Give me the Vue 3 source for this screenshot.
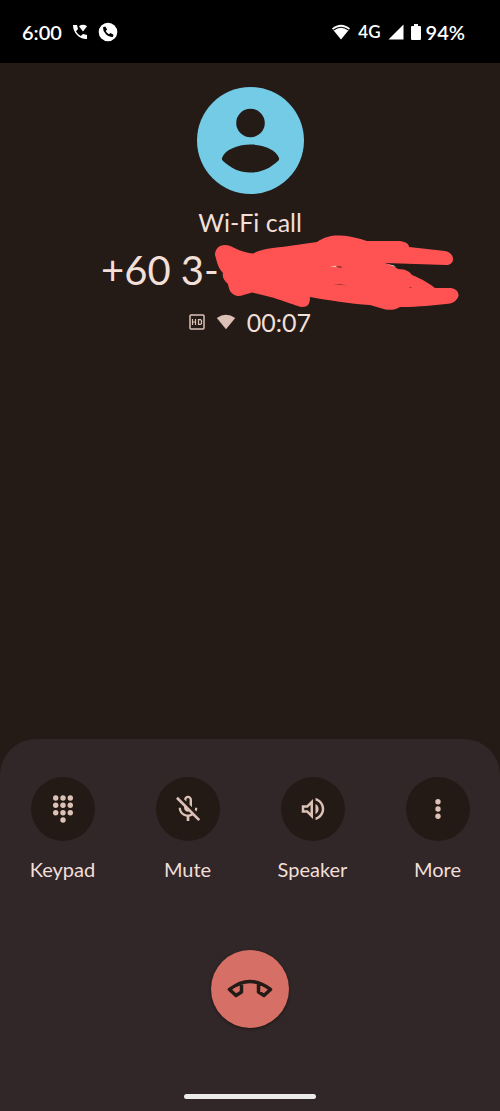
<script setup>
const keypadDots = [
  [7.7, 4], [15, 4], [22.3, 4],
  [7.7, 11.3], [15, 11.3], [22.3, 11.3],
  [7.7, 18.7], [15, 18.7], [22.3, 18.7],
  [15, 26],
]
const controls = ['Keypad', 'Mute', 'Speaker', 'More']
</script>

<template>
  <main class="screen">
    <header class="status">
      <div class="status-group left">
        <span>6:00</span>
        <svg width="16" height="16" viewBox="0 0 16 16" aria-hidden="true">
          <path d="M1 1h4l1 4-2 2.2q1.6 3.2 4.8 4.8L11 10l4 1v4q-6 .3-10-4T1 1z" />
          <path d="M7 2.2Q11 -.5 15 2.2L11 7.5z" />
        </svg>
        <svg width="20" height="20" viewBox="0 0 20 20" aria-hidden="true">
          <circle cx="10" cy="10" r="9.3" />
          <path class="ink" d="M5 5.2l2.3-.7 1.8 3-1.4 1.6q1 2.1 3.2 3.2l1.6-1.4 3 1.8-.7 2.3q-3.7.6-6.9-2.8T5 5.2z" />
        </svg>
      </div>
      <div class="status-group right">
        <svg width="20" height="16" viewBox="0 0 20 16" aria-hidden="true">
          <path d="M1 4.5Q10-3 19 4.5L10 15.5z" />
          <path class="gap-line" d="M2.5 6Q10 .5 17.5 6" />
        </svg>
        <span class="network">4G</span>
        <svg width="16" height="16" viewBox="0 0 16 16" aria-hidden="true"><path d="M15.5.5v15H.5z" /></svg>
        <div class="status-group battery">
          <svg width="10" height="16" viewBox="0 0 10 16" aria-hidden="true">
            <path d="M3 0h4v2h2q1 0 1 1v12q0 1-1 1H1q-1 0-1-1V3q0-1 1-1h2z" />
          </svg>
          <span>94%</span>
        </div>
      </div>
    </header>

    <section class="caller">
      <svg class="avatar" width="107" height="107" viewBox="0 0 107 107" role="img" aria-label="Contact">
        <circle class="avatar-bg" cx="53.5" cy="53.5" r="53.5" />
        <circle class="avatar-ink" cx="53.5" cy="36" r="14.3" />
        <path class="avatar-ink" d="M25 71C28 62 42 57.5 53.5 57.5S79 62 82 71q.5 1.500-1 3C73 81 65 85.5 53.5 85.5S34 81 26 74q-1.500-1.500-1-3z" />
      </svg>
      <p class="kind">Wi-Fi call</p>
      <h1 class="number">
        +60 3-
        <svg class="scribble" width="260" height="95" viewBox="0 0 260 95" aria-hidden="true">
          <path d="M5 31C5 25 9 21 15 21C22 21 28 28 43 29.5C52 25 62 24 72 23L107 18C115 12 124 11 130 11.5C142 12 150 15 157 17L190 17C196 18 199 20 199 23L235 27C241 28 243 32 243 35C243 39 240 41 236 41L175 39C182 41 185 43 188 45C196 45 200 48 202 51C212 55 220 60 225 64L241 64C247 65 249 69 248.5 72C247 77 242 80 236 80C222 81 212 83 190 83C184 87 176 86 172 84.5L160 81C140 80 118 76 100 73C100 80 98 83 92 83C86 82 66 73 42 68.5C36 70 32 72 28 72C21 71 19 66 18 60C14 56 12 54 13 49C8 44 7 38 5 31Z" />
          <path class="sliver-light" d="M120 42.5l6-.7 1 1.2zM177 40l7 1.5 2 1.500-5-1.500z" />
          <path class="sliver-dark" d="M126 42l6 .5-1 1.500-4-1zM123 60.3h7l7 1-7-.2zM199.5 63h2v.8h-2z" />
        </svg>
      </h1>
      <div class="timer">
        <svg width="16" height="16" viewBox="0 0 16 16" role="img" aria-label="HD">
          <rect class="line" x="1" y="1" width="14" height="14" rx="1" />
          <path class="line thin" d="M3.5 5v6M3.5 8h3M6.5 5v6M9.5 5.6v4.8h2l1-1V6.6l-1-1z" />
        </svg>
        <svg width="20" height="16" viewBox="0 0 20 16" aria-hidden="true"><path d="M.8 4Q10-2.4 19.2 4L10 15.3z" /></svg>
        <time>00:07</time>
      </div>
    </section>

    <section class="panel">
      <div class="controls">
        <button v-for="name in controls" :key="name" type="button" class="control">
          <span class="disc">
            <svg v-if="name === 'Keypad'" width="30" height="30" viewBox="0 0 30 30" aria-hidden="true">
              <circle v-for="([x, y], i) in keypadDots" :key="i" :cx="x" :cy="y" r="2.7" />
            </svg>
            <svg v-else-if="name === 'Mute'" width="32" height="32" viewBox="0 0 24 24" aria-hidden="true">
              <path d="M10.8 4.9c0-.66.54-1.2 1.2-1.2s1.2.54 1.2 1.2l-.01 3.91L15 10.6V5c0-1.66-1.34-3-3-3-1.54 0-2.79 1.16-2.96 2.65l1.76 1.76V4.9zM19 11h-1.7c0 .58-.1 1.13-.27 1.64l1.27 1.27c.44-.88.7-1.87.7-2.91zM4.41 2.86L3 4.27l6 6V11c0 1.66 1.34 3 3 3 .23 0 .44-.03.65-.08l1.66 1.66c-.71.33-1.5.52-2.31.52-2.76 0-5.3-2.1-5.3-5.1H5c0 3.41 2.72 6.23 6 6.72V21h2v-3.28c.91-.13 1.77-.45 2.55-.9l4.2 4.2 1.41-1.41L4.41 2.86z" />
            </svg>
            <svg v-else-if="name === 'Speaker'" width="30" height="30" viewBox="0 0 24 24" aria-hidden="true">
              <path d="M3 9v6h4l5 5V4L7 9H3zm7-.17v6.34L7.83 13H5v-2h2.83L10 8.83zM16.5 12c0-1.77-1.02-3.29-2.5-4.03v8.05c1.48-.73 2.5-2.25 2.5-4.02zM14 3.23v2.06c2.89.86 5 3.54 5 6.71s-2.11 5.85-5 6.71v2.06c4.01-.91 7-4.49 7-8.77s-2.99-7.86-7-8.77z" />
            </svg>
            <svg v-else width="30" height="30" viewBox="0 0 30 30" aria-hidden="true">
              <circle v-for="y in [7.7, 15, 22.3]" :key="y" cx="15" :cy="y" r="2.7" />
            </svg>
          </span>
          <span class="label">{{ name }}</span>
        </button>
      </div>
      <button type="button" class="end" aria-label="End call">
        <svg width="46" height="20" viewBox="0 0 46 20" aria-hidden="true">
          <path class="handset" d="M2.5 10.5Q23-5.5 43.5 10.5L37 16.5 31.5 13V4.5M14.5 4.5V13L9 16.5 2.5 10.5" />
        </svg>
      </button>
      <div class="home"></div>
    </section>
  </main>
</template>

<style>
body {
  margin: 0;
  background: #241b17;
}
</style>

<style scoped>
.screen {
  display: flex;
  flex-direction: column;
  min-height: 100vh;
  background: #241b17;
  color: #f1dfd8;
  font-family: Lato, "Open Sans", sans-serif;
}
svg {
  display: block;
  flex: none;
  fill: currentColor;
}
.status {
  display: flex;
  align-items: center;
  justify-content: space-between;
  box-sizing: border-box;
  height: 63px;
  padding: 0 35px 0 22px;
  background: #000;
  color: #fff;
  font-size: 20px;
  font-weight: 600;
  line-height: 22px;
}
.status-group {
  display: flex;
  align-items: center;
}
.left {
  gap: 10px;
}
.right {
  gap: 7px;
}
.battery {
  gap: 5px;
}
.network {
  font-size: 17px;
}
.ink {
  fill: #000;
}
.gap-line {
  fill: none;
  stroke: #000;
  stroke-width: 1.2;
}
.caller {
  display: flex;
  flex: 1;
  flex-direction: column;
  align-items: center;
  padding-top: 24px;
}
.avatar-bg {
  fill: #73cbe5;
}
.avatar-ink {
  fill: #241b17;
}
.kind {
  margin: 12px 0 8px;
  font-size: 25px;
  line-height: 32px;
}
.number {
  position: relative;
  width: 298px;
  margin: 0 0 12px;
  font-size: 40px;
  font-weight: 400;
  line-height: 48px;
}
.scribble {
  position: absolute;
  top: -22px;
  left: 109px;
  fill: #ff5353;
}
.sliver-light {
  fill: #f1dfd8;
}
.sliver-dark {
  fill: #7c302c;
}
.timer {
  display: flex;
  align-items: center;
  gap: 11px;
  font-size: 25px;
  line-height: 32px;
}
.timer svg {
  color: #dcc1b6;
}
.line {
  fill: none;
  stroke: currentColor;
  stroke-width: 1.5;
}
.thin {
  stroke-width: 1.2;
}
.panel {
  display: flex;
  flex-direction: column;
  align-items: center;
  padding: 38px 0 12px;
  border-radius: 36px 36px 0 0;
  background: #312728;
}
.controls {
  display: grid;
  grid-template-columns: repeat(4, 1fr);
  width: 100%;
}
button {
  padding: 0;
  border: 0;
  background: none;
  color: inherit;
  font: inherit;
  cursor: pointer;
}
.control {
  display: flex;
  flex-direction: column;
  align-items: center;
  gap: 14px;
}
.disc {
  display: grid;
  place-items: center;
  width: 64px;
  height: 64px;
  border-radius: 50%;
  background: #231a15;
  color: #dcc1b6;
}
.label {
  font-size: 20px;
  line-height: 28px;
}
.end {
  display: grid;
  place-items: center;
  width: 78px;
  height: 78px;
  margin: 67px 0 66px;
  border-radius: 50%;
  background: #d67066;
  box-shadow: 0 1px 3px #1c1414;
}
.handset {
  fill: none;
  stroke: #241b17;
  stroke-width: 3.5;
  stroke-linecap: round;
  stroke-linejoin: round;
}
.home {
  width: 132px;
  height: 5px;
  border-radius: 3px;
  background: #edeaea;
}
</style>
